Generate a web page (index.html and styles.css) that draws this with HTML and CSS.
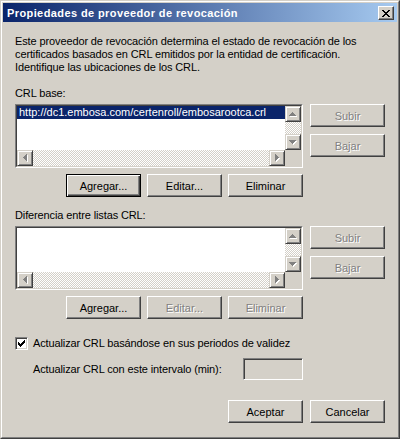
FILE: index.html
```html
<!DOCTYPE html>
<html lang="es">
<head>
    <meta charset="UTF-8">
    <title>Propiedades de proveedor de revocación</title>
    <link rel="stylesheet" href="styles.css">
</head>
<body>
    <!-- Arrow shapes shared by the scroll bars -->
    <svg class="defs" width="0" height="0">
        <defs>
            <path id="arrow-up" d="M3 0h1v1H3z M2 1h3v1H2z M1 2h5v1H1z M0 3h7v1H0z"/>
            <path id="arrow-down" d="M0 0h7v1H0z M1 1h5v1H1z M2 2h3v1H2z M3 3h1v1H3z"/>
            <path id="arrow-left" d="M3 0h1v7H3z M2 1h1v5H2z M1 2h1v3H1z M0 3h1v1H0z"/>
            <path id="arrow-right" d="M0 0h1v7H0z M1 1h1v5H1z M2 2h1v3H2z M3 3h1v1H3z"/>
        </defs>
    </svg>

    <div class="window">
        <div class="frame">
            <div class="titlebar">
                <span class="title">Propiedades de proveedor de revocación</span>
                <button class="close" title="Cerrar">
                    <svg width="8" height="7" viewBox="0 0 8 7" shape-rendering="crispEdges">
                        <path fill="#000" d="M0 0h2v1H0z M6 0h2v1H6z M1 1h2v1H1z M5 1h2v1H5z M2 2h4v1H2z M3 3h2v1H3z M2 4h4v1H2z M1 5h2v1H1z M5 5h2v1H5z M0 6h2v1H0z M6 6h2v1H6z"/>
                    </svg>
                </button>
            </div>

            <div class="content">
                <p class="intro">Este proveedor de revocación determina el estado de revocación de los<br>certificados basados en CRL emitidos por la entidad de certificación.<br>Identifique las ubicaciones de los CRL.</p>

                <!-- CRL base -->
                <div class="group-label">CRL base:</div>
                <div class="list-row">
                    <div class="listbox">
                        <div class="listbox-inner">
                            <div class="items">
                                <div class="item selected">http://dc1.embosa.com/certenroll/embosarootca.crl</div>
                            </div>
                            <div class="vscroll">
                                <div class="arrow"><svg width="8" height="5" viewBox="0 0 8 5"><use href="#arrow-up" x="1" y="1" fill="#fff"/><use href="#arrow-up" fill="#808080"/></svg></div>
                                <div class="track"></div>
                                <div class="arrow"><svg width="8" height="5" viewBox="0 0 8 5"><use href="#arrow-down" x="1" y="1" fill="#fff"/><use href="#arrow-down" fill="#808080"/></svg></div>
                            </div>
                            <div class="hscroll">
                                <div class="arrow"><svg width="5" height="8" viewBox="0 0 5 8"><use href="#arrow-left" x="1" y="1" fill="#fff"/><use href="#arrow-left" fill="#808080"/></svg></div>
                                <div class="track"></div>
                                <div class="arrow"><svg width="5" height="8" viewBox="0 0 5 8"><use href="#arrow-right" x="1" y="1" fill="#fff"/><use href="#arrow-right" fill="#808080"/></svg></div>
                            </div>
                            <div class="corner"></div>
                        </div>
                    </div>
                    <div class="side-buttons">
                        <button class="btn" disabled>Subir</button>
                        <button class="btn" disabled>Bajar</button>
                    </div>
                </div>
                <div class="button-row">
                    <button class="btn default">Agregar...</button>
                    <button class="btn">Editar...</button>
                    <button class="btn">Eliminar</button>
                </div>

                <!-- Diferencia entre listas CRL -->
                <div class="group-label second">Diferencia entre listas CRL:</div>
                <div class="list-row">
                    <div class="listbox">
                        <div class="listbox-inner">
                            <div class="items"></div>
                            <div class="vscroll">
                                <div class="arrow"><svg width="8" height="5" viewBox="0 0 8 5"><use href="#arrow-up" x="1" y="1" fill="#fff"/><use href="#arrow-up" fill="#808080"/></svg></div>
                                <div class="track"></div>
                                <div class="arrow"><svg width="8" height="5" viewBox="0 0 8 5"><use href="#arrow-down" x="1" y="1" fill="#fff"/><use href="#arrow-down" fill="#808080"/></svg></div>
                            </div>
                            <div class="hscroll">
                                <div class="arrow"><svg width="5" height="8" viewBox="0 0 5 8"><use href="#arrow-left" x="1" y="1" fill="#fff"/><use href="#arrow-left" fill="#808080"/></svg></div>
                                <div class="track"></div>
                                <div class="arrow"><svg width="5" height="8" viewBox="0 0 5 8"><use href="#arrow-right" x="1" y="1" fill="#fff"/><use href="#arrow-right" fill="#808080"/></svg></div>
                            </div>
                            <div class="corner"></div>
                        </div>
                    </div>
                    <div class="side-buttons">
                        <button class="btn" disabled>Subir</button>
                        <button class="btn" disabled>Bajar</button>
                    </div>
                </div>
                <div class="button-row">
                    <button class="btn">Agregar...</button>
                    <button class="btn" disabled>Editar...</button>
                    <button class="btn" disabled>Eliminar</button>
                </div>

                <!-- Options -->
                <label class="check-row">
                    <span class="checkbox">
                        <svg width="7" height="7" viewBox="0 0 7 7" shape-rendering="crispEdges">
                            <path fill="#000" d="M6 0h1v1H6z M5 1h2v1H5z M0 2h1v1H0z M4 2h3v1H4z M0 3h2v1H0z M3 3h3v1H3z M0 4h5v1H0z M1 5h3v1H1z M2 6h1v1H2z"/>
                        </svg>
                    </span>
                    Actualizar CRL basándose en sus periodos de validez
                </label>
                <div class="interval-row">
                    <span>Actualizar CRL con este intervalo (min):</span>
                    <input type="text" class="interval-input" disabled>
                </div>

                <div class="form-actions">
                    <button class="btn">Aceptar</button>
                    <button class="btn">Cancelar</button>
                </div>
            </div>
        </div>
    </div>
</body>
</html>
```

FILE: styles.css
```css
/* General Styles */
body {
    font-family: "Liberation Sans", Arial, sans-serif;
    font-size: 11px;
    color: #000;
    background-color: #d4d0c8;
    margin: 0;
    padding: 0;
}

.defs {
    position: absolute;
}

/* Window frame */
.window {
    width: 400px;
    height: 439px;
    box-sizing: border-box;
    border: 1px solid;
    border-color: #d4d0c8 #404040 #404040 #d4d0c8;
    background-color: #d4d0c8;
}

.frame {
    height: 100%;
    box-sizing: border-box;
    border: 1px solid;
    border-color: #ffffff #808080 #808080 #ffffff;
    padding: 1px;
    display: flex;
    flex-direction: column;
}

/* Title bar */
.titlebar {
    height: 19px;
    flex-shrink: 0;
    display: flex;
    align-items: center;
    padding: 0 3px 0 4px;
    background: linear-gradient(to right, #0a246a, #a6caf0);
}

.title {
    color: #ffffff;
    font-weight: bold;
    letter-spacing: 0.4px;
    white-space: nowrap;
}

.close {
    margin-left: auto;
    width: 16px;
    height: 14px;
    box-sizing: border-box;
    padding: 0;
    border: 1px solid;
    border-color: #ffffff #404040 #404040 #ffffff;
    box-shadow: inset -1px -1px #808080;
    background-color: #d4d0c8;
    display: flex;
    align-items: center;
    justify-content: center;
}

.close svg {
    margin: 1px 1px 0 0;
}

/* Content */
.content {
    flex: 1;
    padding: 13px 12px 0 12px;
    display: flex;
    flex-direction: column;
    letter-spacing: -0.12px;
}

.intro {
    margin: 0;
    line-height: 13px;
    white-space: nowrap;
}

.group-label {
    margin-top: 13px;
    line-height: 13px;
}

.group-label.second {
    margin-top: 12px;
}

.list-row {
    display: flex;
    gap: 7px;
    margin-top: 4px;
}

/* List box */
.listbox {
    width: 288px;
    height: 64px;
    box-sizing: border-box;
    border: 1px solid;
    border-color: #808080 #ffffff #ffffff #808080;
}

.listbox-inner {
    height: 100%;
    box-sizing: border-box;
    border: 1px solid;
    border-color: #404040 #d4d0c8 #d4d0c8 #404040;
    background-color: #ffffff;
    display: grid;
    grid-template-columns: 1fr 16px;
    grid-template-rows: 1fr 16px;
}

.items {
    overflow: hidden;
}

.item {
    height: 13px;
    line-height: 13px;
    padding-left: 2px;
    white-space: nowrap;
    letter-spacing: 0;
}

.item.selected {
    background-color: #0a246a;
    color: #ffffff;
}

/* Scroll bars */
.vscroll {
    display: flex;
    flex-direction: column;
}

.hscroll {
    display: flex;
}

.track {
    flex: 1;
    background: repeating-conic-gradient(#ffffff 0 25%, #d4d0c8 0 50%) 0 0 / 2px 2px;
}

.arrow {
    width: 16px;
    height: 16px;
    box-sizing: border-box;
    flex-shrink: 0;
    background-color: #d4d0c8;
    border: 1px solid;
    border-color: #d4d0c8 #404040 #404040 #d4d0c8;
    box-shadow: inset 1px 1px #ffffff, inset -1px -1px #808080;
    display: flex;
    align-items: center;
    justify-content: center;
}

.corner {
    background-color: #d4d0c8;
}

/* Button Styles */
.btn {
    width: 75px;
    height: 23px;
    box-sizing: border-box;
    padding: 0;
    font: inherit;
    letter-spacing: 0;
    color: #000;
    background-color: #d4d0c8;
    border: 1px solid;
    border-color: #ffffff #404040 #404040 #ffffff;
    box-shadow: inset -1px -1px #808080;
}

.btn.default {
    border-color: #000;
    box-shadow: inset 1px 1px #ffffff, inset -1px -1px #404040, inset -2px -2px #808080;
}

.btn:disabled {
    color: #808080;
    text-shadow: 1px 1px #ffffff;
}

.side-buttons {
    display: flex;
    flex-direction: column;
    gap: 7px;
}

.button-row {
    width: 288px;
    display: flex;
    justify-content: flex-end;
    gap: 6px;
    margin-top: 6px;
}

/* Options */
.check-row {
    margin-top: 18px;
    display: flex;
    align-items: center;
    gap: 5px;
    line-height: 13px;
}

.checkbox {
    width: 13px;
    height: 13px;
    box-sizing: border-box;
    border: 1px solid;
    border-color: #808080 #ffffff #ffffff #808080;
    box-shadow: inset 1px 1px #404040, inset -1px -1px #d4d0c8;
    background-color: #ffffff;
    display: flex;
    align-items: center;
    justify-content: center;
}

.interval-row {
    width: 270px;
    margin-top: 8px;
    padding-left: 18px;
    display: flex;
    align-items: center;
}

.interval-input {
    margin-left: auto;
    width: 60px;
    height: 22px;
    box-sizing: border-box;
    padding: 0;
    border: 1px solid;
    border-color: #808080 #ffffff #ffffff #808080;
    box-shadow: inset 1px 1px #404040, inset -1px -1px #d4d0c8;
    background-color: #d4d0c8;
}

.form-actions {
    display: flex;
    justify-content: flex-end;
    gap: 7px;
    margin-top: 20px;
}
```
